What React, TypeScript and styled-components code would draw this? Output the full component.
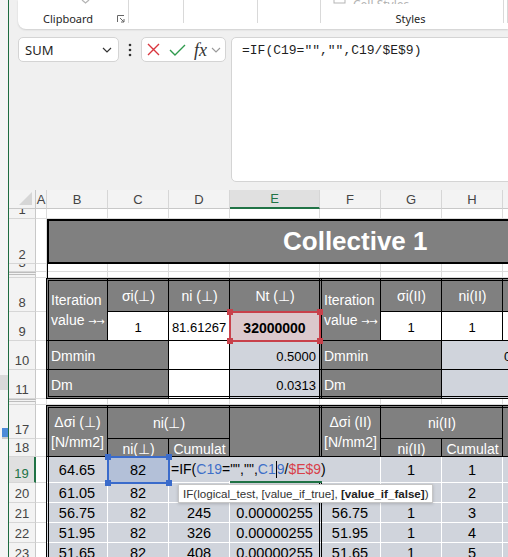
import React from 'react';
import styled, { createGlobalStyle } from 'styled-components';

const GREY = '#808080';
const TINT = '#d0d4dc';
const PICKED = '#b3c0d8';
const REF_RED = '#dbc8cc';
const GRID = '#dcdcdc';
const GREEN = '#217346';

const GlobalStyle = createGlobalStyle`
  html, body { margin: 0; padding: 0; }
  body { background: #f3f3f3; overflow: hidden; }
`;

const LETTERS = ['A', 'B', 'C', 'D', 'E', 'F', 'G', 'H', 'I'];
// visible sheet rows, '' marks the thin rows next to hidden ones
const ROW_NAMES = ['1', '2', '3', '', '8', '9', '10', '11', '', '17', '18', '19', '20', '21', '22', '23'];

// row 20 sits under the argument tooltip, so only its outer cells show
const DATA = [
  ['64.65', '82', '', '', '', '1', '1', ''],
  ['61.05', '82', '', '', '', '', '2', ''],
  ['56.75', '82', '245', '0.00000255', '56.75', '1', '3', ''],
  ['51.95', '82', '326', '0.00000255', '51.95', '1', '4', ''],
  ['51.65', '82', '408', '0.00000255', '51.65', '1', '5', ''],
];

export default function App() {
  return (
    <>
      <GlobalStyle />
      <Page>
        <DesktopEdge>
          <EdgePanel />
          <EdgeIcon />
        </DesktopEdge>
        <Window>
          <Ribbon>
            <Group $w={111}>
              <Faded $ml={63}>
                <svg width="9" height="4" viewBox="0 0 9 4">
                  <path d="M1 0l3.5 3L8 0" fill="none" stroke="#b5b5b5" strokeWidth="1.3" />
                </svg>
              </Faded>
              <GroupLabel $start>
                Clipboard
                <Launcher width="8" height="8" viewBox="0 0 8 8">
                  <path d="M0.5 7V0.5H7" fill="none" stroke="#666" strokeWidth="1" />
                  <path d="M3 3l4 4M7 4v3H4" fill="none" stroke="#666" strokeWidth="1" />
                </Launcher>
              </GroupLabel>
            </Group>
            <Group $w={55} />
            <Group $w={74} />
            <Group $w={63} />
            <Group $w={183}>
              <Faded $ml={12}>
                <svg width="13" height="12" viewBox="0 0 13 12">
                  <rect x="1" y="1" width="11" height="10" fill="none" stroke="#b5b5b5" />
                </svg>
                <FadedText>Cell Styles</FadedText>
              </Faded>
              <GroupLabel>Styles</GroupLabel>
            </Group>
            <Group />
          </Ribbon>

          <FormulaBar>
            <NameBox>
              <span>SUM</span>
              <svg width="10" height="6" viewBox="0 0 10 6">
                <path d="M1 1l4 4 4-4" fill="none" stroke="#333" strokeWidth="1.2" />
              </svg>
            </NameBox>
            <Dots>
              <svg width="4" height="14" viewBox="0 0 4 14">
                <circle cx="2" cy="2" r="1.3" fill="#333" />
                <circle cx="2" cy="7" r="1.3" fill="#333" />
                <circle cx="2" cy="12" r="1.3" fill="#333" />
              </svg>
            </Dots>
            <FxBox>
              <FxItem $ml={5}>
                <svg width="13" height="13" viewBox="0 0 13 13">
                  <path d="M1 1l11 11M12 1L1 12" stroke="#d9363e" strokeWidth="1.4" />
                </svg>
              </FxItem>
              <FxItem $ml={9}>
                <svg width="17" height="12" viewBox="0 0 17 12">
                  <path d="M1 6l5 5L16 1" fill="none" stroke="#2f9a4d" strokeWidth="1.4" />
                </svg>
              </FxItem>
              <FxText>fx</FxText>
              <FxItem $ml={4}>
                <svg width="10" height="6" viewBox="0 0 10 6">
                  <path d="M1 1l4 4 4-4" fill="none" stroke="#9a9a9a" strokeWidth="1.1" />
                </svg>
              </FxItem>
            </FxBox>
            <FormulaInput>=IF(C19="","",C19/$E$9)</FormulaInput>
          </FormulaBar>

          <Sheet>
            <Corner $col="1" $row="1">
              <svg width="13" height="13" viewBox="0 0 13 13">
                <path d="M13 0V13H0z" fill="#d6d6d6" />
              </svg>
            </Corner>
            {LETTERS.map((l, i) => (
              <ColHead key={l} $col={`${i + 2}`} $row="1" $active={l === 'E'}>
                {l}
              </ColHead>
            ))}
            {ROW_NAMES.map((n, r) => (
              <RowHead key={`rh${r}`} $col="1" $row={`${r + 2}`} $active={n === '19'} $gap={n === ''}>
                {n}
              </RowHead>
            ))}
            {ROW_NAMES.map((_, r) =>
              LETTERS.map((l, c) => <Blank key={`b${r}${l}`} $col={`${c + 2}`} $row={`${r + 2}`} />)
            )}

            <Title $col="3 / 11" $row="3">Collective 1</Title>
            <LeftRule $col="3" $row="4 / 6" />

            {/* iteration block */}
            <Head $col="3" $row="6 / 8" $align="flex-start" $pt={3}>
              <Lines>
                Iteration
                <br />
                value <Arrows>→→</Arrows>
              </Lines>
            </Head>
            <Head $col="4" $row="6" $pt={3}>σi(⊥)</Head>
            <Head $col="5" $row="6" $pt={3}>ni (⊥)</Head>
            <Head $col="6" $row="6" $pt={3}>Nt (⊥)</Head>
            <Head $col="7" $row="6 / 8" $align="flex-start" $pt={3}>
              <Lines>
                Iteration
                <br />
                value <Arrows>→→</Arrows>
              </Lines>
            </Head>
            <Head $col="8" $row="6" $pt={3}>σi(II)</Head>
            <Head $col="9" $row="6" $pt={3}>ni(II)</Head>
            <Head $col="10" $row="6" $pt={3} />

            <Val $col="4" $row="7" $pt={3}>1</Val>
            <Val $col="5" $row="7" $pt={3}>81.61267</Val>
            <Val $col="6" $row="7" $fill={REF_RED} $bold $size={14} $pt={3}>32000000</Val>
            <Val $col="8" $row="7" $pt={3}>1</Val>
            <Val $col="9" $row="7" $pt={3}>1</Val>
            <Val $col="10" $row="7" />

            <Head $col="3 / 5" $row="8" $align="flex-start" $pt={2}>Dmmin</Head>
            <Val $col="5" $row="8" />
            <Val $col="6" $row="8" $fill={TINT} $align="flex-end" $pt={2}>0.5000</Val>
            <Head $col="7 / 9" $row="8" $align="flex-start" $pt={2}>Dmmin</Head>
            <Val $col="9 / 11" $row="8" $fill={TINT} $align="flex-start" $pl={62} $pt={2}>0.5000</Val>

            <Head $col="3 / 5" $row="9" $align="flex-start" $pt={2}>Dm</Head>
            <Val $col="5" $row="9" />
            <Val $col="6" $row="9" $fill={TINT} $align="flex-end" $pt={2}>0.0313</Val>
            <Head $col="7 / 9" $row="9" $align="flex-start" $pt={2}>Dm</Head>
            <Val $col="9 / 11" $row="9" $fill={TINT} />

            <Frame $col="3 / 11" $row="6 / 10" />
            <Split $col="7" $row="6 / 10" />

            {/* load spectrum block */}
            <Head $col="3" $row="11 / 13" $pt={3}>
              <Lines>
                Δσi (⊥)
                <br />
                [N/mm2]
              </Lines>
            </Head>
            <Head $col="4 / 6" $row="11" $pt={3}>ni(⊥)</Head>
            <Head $col="4" $row="12" $pt={3}>ni(⊥)</Head>
            <Head $col="5" $row="12" $pt={3}>Cumulat</Head>
            <Head $col="6" $row="11 / 13" />
            <Head $col="7" $row="11 / 13" $pt={3}>
              <Lines>
                Δσi (II)
                <br />
                [N/mm2]
              </Lines>
            </Head>
            <Head $col="8 / 10" $row="11" $pt={3}>ni(II)</Head>
            <Head $col="8" $row="12" $pt={3}>ni(II)</Head>
            <Head $col="9" $row="12" $pt={3}>Cumulat</Head>
            <Head $col="10" $row="11 / 13" />

            {DATA.map((row, r) =>
              row.map((v, c) => (
                <Val
                  key={`d${r}${c}`}
                  $col={`${c + 3}`}
                  $row={`${r + 13}`}
                  $fill={r === 0 && c === 1 ? PICKED : TINT}
                  $lines="#fff"
                  $size={14.5}
                >
                  {v}
                </Val>
              ))
            )}

            <Frame $col="3 / 11" $row="11 / 18" />
            <Split $col="7" $row="11 / 18" />

            <Highlight $col="6" $row="7" $tone="#c8414b">
              <Handle $tone="#c8414b" $x="left" $y="top" />
              <Handle $tone="#c8414b" $x="right" $y="top" />
              <Handle $tone="#c8414b" $x="left" $y="bottom" />
              <Handle $tone="#c8414b" $x="right" $y="bottom" />
            </Highlight>

            <EditBox $col="5 / 8" $row="13">
              =IF(<Ref $tone="#3e6fc8">C19</Ref>="","",<Ref $tone="#3e6fc8">C1</Ref>
              <Caret />
              <Ref $tone="#3e6fc8">9</Ref>/<Ref $tone="#d8404a">$E$9</Ref>)
            </EditBox>
            <ActiveEdge $col="6" $row="13" />

            <Highlight $col="4" $row="13" $tone="#3a6bcb">
              <Handle $tone="#3a6bcb" $x="left" $y="top" />
              <Handle $tone="#3a6bcb" $x="right" $y="top" />
              <Handle $tone="#3a6bcb" $x="left" $y="bottom" />
              <Handle $tone="#3a6bcb" $x="right" $y="bottom" />
            </Highlight>

            <Tip $col="5 / 10" $row="14">
              IF(logical_test, [value_if_true], <b>[value_if_false]</b>)
            </Tip>
          </Sheet>
        </Window>
      </Page>
    </>
  );
}

/* window chrome */

const Page = styled.div`
  display: flex;
  width: 508px;
  height: 557px;
  overflow: hidden;
`;

const DesktopEdge = styled.div`
  width: 8px;
  flex: none;
  display: flex;
  flex-direction: column;
  background: #f4f4f4;
`;

const EdgePanel = styled.div`
  margin-top: 375px;
  height: 15px;
  background: #d9d9d9;
`;

const EdgeIcon = styled.div`
  margin: 38px 0 0 2px;
  height: 9px;
  background: #4c8ad8;
  border-bottom: 2px solid #c9c9c9;
`;

const Window = styled.div`
  flex: 1;
  min-width: 0;
  display: flex;
  flex-direction: column;
  background: #f0f0f0;
  border-left: 1px solid #1d6b3f;
`;

const Ribbon = styled.div`
  margin-left: 9px;
  height: 29px;
  flex: none;
  display: flex;
  background: #fff;
  border-bottom-left-radius: 8px;
  box-shadow: 0 1px 2px rgba(0, 0, 0, 0.14);
  font-family: "Noto Sans", "Liberation Sans", sans-serif;
  overflow: hidden;
`;

const Group = styled.div<{ $w?: number }>`
  ${p => (p.$w ? `width: ${p.$w}px; flex: none;` : 'flex: 1;')}
  display: flex;
  flex-direction: column;
  background: linear-gradient(#d9d9d9, #d9d9d9) right top / 1px 23px no-repeat;
`;

const Faded = styled.div<{ $ml: number }>`
  display: flex;
  align-items: flex-end;
  gap: 7px;
  height: 4px;
  margin-left: ${p => p.$ml}px;
  overflow: hidden;
`;

const FadedText = styled.span`
  font-size: 12px;
  line-height: 16px;
  color: #b3b3b3;
  margin-bottom: -9px;
`;

const GroupLabel = styled.div<{ $start?: boolean }>`
  margin-top: auto;
  height: 14px;
  padding: 0 4px 3px ${p => (p.$start ? 25 : 0)}px;
  display: flex;
  align-items: center;
  justify-content: ${p => (p.$start ? 'flex-start' : 'center')};
  font-size: 11px;
  line-height: 14px;
  color: #262626;
`;

const Launcher = styled.svg`
  margin-left: auto;
`;

const FormulaBar = styled.div`
  display: flex;
  align-items: flex-start;
  margin-top: 8px;
  padding-left: 9px;
  height: 145px;
  flex: none;
  font-family: "Noto Sans", "Liberation Sans", sans-serif;
`;

const NameBox = styled.div`
  box-sizing: border-box;
  width: 101px;
  height: 25px;
  padding: 0 6px 0 6px;
  display: flex;
  align-items: center;
  justify-content: space-between;
  background: #fff;
  border: 1px solid #d4d4d4;
  border-radius: 5px;
  font-size: 13px;
  color: #1f1f1f;
`;

const Dots = styled.div`
  width: 22px;
  height: 25px;
  display: flex;
  align-items: center;
  justify-content: center;
`;

const FxBox = styled.div`
  box-sizing: border-box;
  width: 85px;
  height: 25px;
  display: flex;
  align-items: center;
  background: #fff;
  border: 1px solid #d4d4d4;
  border-radius: 5px;
`;

const FxItem = styled.span<{ $ml: number }>`
  display: flex;
  margin-left: ${p => p.$ml}px;
`;

const FxText = styled.span`
  margin-left: 8px;
  font-family: "Liberation Serif", serif;
  font-style: italic;
  font-size: 18px;
  line-height: 18px;
  color: #333;
`;

const FormulaInput = styled.div`
  box-sizing: border-box;
  flex: 1;
  margin: 0 -8px 0 5px;
  height: 145px;
  padding: 4px 10px;
  background: #fff;
  border: 1px solid #d4d4d4;
  border-radius: 5px;
  font-family: "Liberation Mono", monospace;
  font-size: 13px;
  line-height: 17px;
  color: #1f1f1f;
  white-space: pre;
`;

/* worksheet */

const Sheet = styled.div`
  margin-top: 8px;
  flex: none;
  display: grid;
  grid-template-columns: 27px 11px 61px 61px 61px 90px 61px 61px 61px 61px;
  grid-template-rows: 19px 10px 45px 8px 6px 34px 29px 29px 29px 6px 34px 18px 26px 20px 20px 20px 20px;
  background: #fff;
  font-family: "Liberation Sans", Arial, sans-serif;
`;

const Box = styled.div<{ $col: string; $row: string }>`
  grid-column: ${p => p.$col};
  grid-row: ${p => p.$row};
  box-sizing: border-box;
  min-width: 0;
  overflow: hidden;
`;

const Corner = styled(Box)`
  background: #f3f3f3;
  border-right: 1px solid #c8c8c8;
  border-bottom: 1px solid #c8c8c8;
  display: flex;
  align-items: flex-end;
  justify-content: flex-end;
  padding: 0 3px 3px 0;
`;

const ColHead = styled(Box)<{ $active?: boolean }>`
  background: ${p => (p.$active ? '#e0e0e0' : '#f3f3f3')};
  color: ${p => (p.$active ? GREEN : '#444')};
  border-right: 1px solid #d6d6d6;
  border-bottom: ${p => (p.$active ? `2px solid ${GREEN}` : '1px solid #c8c8c8')};
  display: flex;
  align-items: center;
  justify-content: center;
  font-size: 13px;
`;

const RowHead = styled(Box)<{ $active?: boolean; $gap?: boolean }>`
  background: ${p => (p.$active ? '#e0e0e0' : '#f3f3f3')};
  color: ${p => (p.$active ? GREEN : '#444')};
  border-right: ${p => (p.$active ? `2px solid ${GREEN}` : '1px solid #c8c8c8')};
  border-bottom: 1px solid #d6d6d6;
  ${p => (p.$gap ? 'border-top: 3px double #bdbdbd;' : '')}
  display: flex;
  align-items: flex-end;
  justify-content: center;
  padding-bottom: 1px;
  font-size: 13px;
  line-height: 15px;
`;

const Blank = styled(Box)`
  border-right: 1px solid ${GRID};
  border-bottom: 1px solid ${GRID};
`;

const Title = styled(Box)`
  background: ${GREY};
  border: 2px solid #000;
  border-right: none;
  display: flex;
  align-items: center;
  padding-left: 234px;
  color: #fff;
  font-weight: 700;
  font-size: 26px;
  white-space: nowrap;
`;

const LeftRule = styled(Box)`
  border-left: 1px solid #000;
`;

const Head = styled(Box)<{ $align?: string; $pt?: number }>`
  background: ${GREY};
  color: #fff;
  border-right: 1px solid #000;
  border-bottom: 1px solid #000;
  display: flex;
  align-items: center;
  justify-content: ${p => p.$align ?? 'center'};
  text-align: ${p => (p.$align === 'flex-start' ? 'left' : 'center')};
  padding: ${p => p.$pt ?? 0}px 3px 0 4px;
  font-size: 14px;
  line-height: 20px;
  white-space: nowrap;
`;

const Lines = styled.span`
  display: block;
`;

const Arrows = styled.span`
  font-family: "DejaVu Sans", sans-serif;
  font-size: 10px;
  letter-spacing: -0.5px;
`;

const Val = styled(Box)<{
  $fill?: string;
  $lines?: string;
  $align?: string;
  $bold?: boolean;
  $size?: number;
  $pt?: number;
  $pl?: number;
}>`
  background: ${p => p.$fill ?? '#fff'};
  color: #000;
  border-right: 1px solid ${p => p.$lines ?? '#000'};
  border-bottom: 1px solid ${p => p.$lines ?? '#000'};
  display: flex;
  align-items: center;
  justify-content: ${p => p.$align ?? 'center'};
  padding: ${p => p.$pt ?? 0}px 3px 0 ${p => p.$pl ?? 3}px;
  font-size: ${p => p.$size ?? 13}px;
  font-weight: ${p => (p.$bold ? 700 : 400)};
  white-space: nowrap;
`;

const Frame = styled(Box)`
  margin-left: -1px;
  border: 3px double #000;
  z-index: 2;
  pointer-events: none;
`;

const Split = styled(Box)`
  margin-left: -1px;
  border-left: 3px double #000;
  z-index: 2;
  pointer-events: none;
`;

const Highlight = styled(Box)<{ $tone: string }>`
  position: relative;
  margin: -1px;
  border: 2px solid ${p => p.$tone};
  overflow: visible;
  z-index: 5;
  pointer-events: none;
`;

const Handle = styled.span<{ $tone: string; $x: 'left' | 'right'; $y: 'top' | 'bottom' }>`
  position: absolute;
  ${p => p.$x}: -4px;
  ${p => p.$y}: -4px;
  width: 6px;
  height: 6px;
  background: ${p => p.$tone};
`;

const EditBox = styled(Box)`
  justify-self: start;
  width: 160px;
  height: 24px;
  margin-left: 1px;
  padding-left: 1px;
  background: ${TINT};
  display: flex;
  align-items: center;
  font-size: 14px;
  white-space: pre;
  color: #000;
  z-index: 3;
`;

const Ref = styled.span<{ $tone: string }>`
  color: ${p => p.$tone};
`;

const Caret = styled.span`
  display: inline-block;
  width: 1px;
  height: 17px;
  background: #000;
`;

const ActiveEdge = styled(Box)`
  align-self: end;
  width: 92px;
  height: 2px;
  background: ${GREEN};
  z-index: 4;
`;

const Tip = styled(Box)`
  justify-self: start;
  align-self: start;
  width: 255px;
  height: 19px;
  margin: 1px 0 0 9px;
  padding-left: 4px;
  background: #fff;
  border: 1px solid #c6c6c6;
  box-shadow: 0 1px 3px rgba(0, 0, 0, 0.18);
  display: flex;
  align-items: center;
  font-size: 11.6px;
  color: #333;
  white-space: pre;
  z-index: 6;

  b {
    color: #222;
  }
`;
